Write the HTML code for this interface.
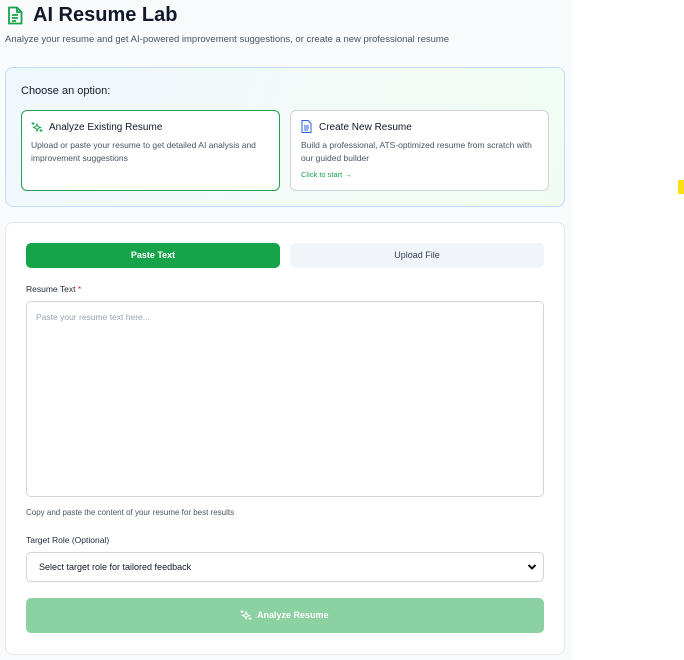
<!DOCTYPE html>
<html><head><style>
*{box-sizing:border-box;margin:0;padding:0}
body{width:684px;height:660px;background:#fff;font-family:"Liberation Sans",sans-serif;position:relative;overflow:hidden;color:#111827}
.bg{position:absolute;left:0;top:0;width:572px;height:660px;background:#f8fafc}
.a{position:absolute}
h1{position:absolute;left:33px;top:4px;font-size:20px;font-weight:700;color:#111827}
.sub{left:5px;top:34px;font-size:9.5px;color:#4b5563}
.c1{left:5px;top:67px;width:560px;height:140px;border:1px solid #bfdbfe;border-radius:8px;background:linear-gradient(110deg,#f0f7ff,#f4fbf6 70%,#effcf3)}
.opt{background:#fff;border:1px solid #d1d5db;border-radius:6px;top:110px;height:81px;width:259px}
.t{font-size:10px;color:#111827}
.d{font-size:8.5px;color:#4b5563;line-height:13px}
.c2{left:5px;top:222px;width:560px;height:433px;border:1px solid #e5e7eb;border-radius:8px;background:#fff}
.tab{top:243px;height:25px;border-radius:5px;font-size:9px;font-weight:700;text-align:center;line-height:25px}
.lbl{font-size:8.5px;color:#1f2937}
</style></head><body>
<div class="bg"></div>
<svg class="a" style="left:7px;top:6px" width="16" height="19" viewBox="0 0 16 19" fill="none" stroke="#16a34a" stroke-width="1.8"><path d="M2 1.5h8l4.5 4.5v11.5h-12.5z"/><path d="M10 1.5v4.5h4.5M5 9h6M5 12h6M5 15h4"/></svg>
<h1>AI Resume Lab</h1>
<div class="a sub">Analyze your resume and get AI-powered improvement suggestions, or create a new professional resume</div>
<div class="a c1"></div>
<div class="a" style="left:21px;top:85px;font-size:11px;color:#111827">Choose an option:</div>
<div class="a opt" style="left:21px;border-color:#22a150"></div>
<svg class="a" style="left:31px;top:121px" width="12" height="12" viewBox="0 0 12 12" fill="none" stroke="#16a34a" stroke-width="1"><path d="M6 3l1 2.5 2.5 1-2.5 1L6 10 5 7.5 2.5 6.5 5 5.5z"/><path d="M2 1v3M.5 2.5h3M10 8v3M8.5 9.5h3"/></svg>
<div class="a t" style="left:49px;top:122px">Analyze Existing Resume</div>
<div class="a d" style="left:31px;top:139px;width:245px">Upload or paste your resume to get detailed AI analysis and improvement suggestions</div>
<div class="a opt" style="left:290px"></div>
<svg class="a" style="left:301px;top:120px" width="11" height="13" viewBox="0 0 11 13" fill="none" stroke="#2563eb" stroke-width="1"><path d="M1 .5h6l3 3v9H1z"/><path d="M3 6h5M3 8h5M3 10h4"/></svg>
<div class="a t" style="left:319px;top:122px">Create New Resume</div>
<div class="a d" style="left:301px;top:139px;width:245px">Build a professional, ATS-optimized resume from scratch with our guided builder</div>
<div class="a" style="left:301px;top:170px;font-size:7.5px;color:#16a34a">Click to start →</div>
<div class="a c2"></div>
<div class="a tab" style="left:26px;width:254px;background:#16a34a;color:#fff">Paste Text</div>
<div class="a tab" style="left:290px;width:254px;background:#f1f5f9;color:#374151;font-weight:400">Upload File</div>
<div class="a lbl" style="left:26px;top:284px">Resume Text <span style="color:#dc2626">*</span></div>
<div class="a" style="left:26px;top:301px;width:518px;height:196px;border:1px solid #d1d5db;border-radius:5px"></div>
<div class="a" style="left:36px;top:312px;font-size:8.5px;color:#9ca3af">Paste your resume text here...</div>
<div class="a" style="left:26px;top:508px;font-size:8px;color:#4b5563">Copy and paste the content of your resume for best results</div>
<div class="a lbl" style="left:26px;top:535px">Target Role (Optional)</div>
<div class="a" style="left:26px;top:552px;width:518px;height:30px;border:1px solid #d1d5db;border-radius:5px"></div>
<div class="a" style="left:39px;top:562px;font-size:9px;color:#111827">Select target role for tailored feedback</div>
<svg class="a" style="left:527px;top:563px" width="10" height="8" viewBox="0 0 10 8"><path d="M1.5 2l3.5 3.5L8.5 2" fill="none" stroke="#111" stroke-width="2"/></svg>
<div class="a" style="left:26px;top:598px;width:518px;height:35px;border-radius:5px;background:#8bd1a2"></div>
<svg class="a" style="left:240px;top:609px" width="12" height="12" viewBox="0 0 12 12" fill="none" stroke="#fff" stroke-width="1"><path d="M6 3l1 2.5 2.5 1-2.5 1L6 10 5 7.5 2.5 6.5 5 5.5z"/><path d="M2 1v3M.5 2.5h3M10 8v3M8.5 9.5h3"/></svg>
<div class="a" style="left:257px;top:610px;font-size:9px;font-weight:700;color:#fff">Analyze Resume</div>
<div class="a" style="left:678px;top:180px;width:6px;height:14px;background:#fde013"></div>
</body></html>
